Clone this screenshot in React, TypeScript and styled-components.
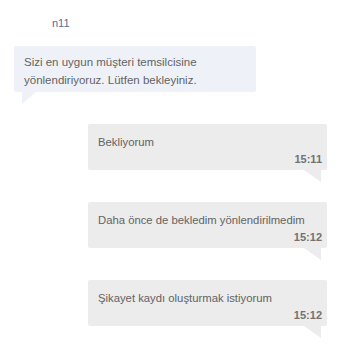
import { FC } from 'react';
import styled, { createGlobalStyle } from 'styled-components';

const GlobalStyle = createGlobalStyle`
  html, body {
    margin: 0;
    padding: 0;
    background: #ffffff;
    font-family: 'Liberation Sans', Arial, sans-serif;
  }
`;

const Page = styled.div`
  width: 350px;
  height: 350px;
  overflow: hidden;
  display: flex;
  flex-direction: column;
  padding-top: 16px;
  box-sizing: border-box;
`;

const Sender = styled.div`
  margin-left: 52px;
  height: 14px;
  font-size: 11px;
  line-height: 14px;
  color: #4f6fa3;
`;

const Bubble = styled.div<{ $mine?: boolean }>`
  position: relative;
  box-sizing: border-box;
  height: 46px;
  margin-left: ${(p) => (p.$mine ? '88px' : '14px')};
  margin-right: ${(p) => (p.$mine ? '23px' : '94px')};
  margin-top: ${(p) => (p.$mine ? '32px' : '16px')};
  padding: ${(p) => (p.$mine ? '9px 5px 0 10px' : '7px 10px 0 10px')};
  background: ${(p) => (p.$mine ? '#ececec' : '#eef2f8')};
  border-radius: 2px;
  font-size: ${(p) => (p.$mine ? '11.3px' : '11.5px')};
  line-height: 18px;
  color: #636363;

  &::after {
    content: '';
    position: absolute;
    top: 100%;
    width: 0;
    height: 0;
    ${(p) =>
      p.$mine
        ? `right: 6px;
           border-top: 12px solid #ececec;
           border-left: 17px solid transparent;`
        : `left: 8px;
           border-top: 12px solid #eef2f8;
           border-right: 14px solid transparent;`}
  }
`;

const Time = styled.div`
  text-align: right;
  font-size: 11px;
  line-height: 16px;
  font-weight: bold;
  color: #727272;
`;

interface IMessage {
  text: string;
  time: string;
}

const messages: IMessage[] = [
  { text: 'Bekliyorum', time: '15:11' },
  { text: 'Daha önce de bekledim yönlendirilmedim', time: '15:12' },
  { text: 'Şikayet kaydı oluşturmak istiyorum', time: '15:12' },
];

const App: FC = () => {
  return (
    <Page>
      <GlobalStyle />
      <Sender>n11</Sender>
      <Bubble>
        Sizi en uygun müşteri temsilcisine
        <br />
        yönlendiriyoruz. Lütfen bekleyiniz.
      </Bubble>
      {messages.map((m, i) => (
        <Bubble $mine key={i}>
          {m.text}
          <Time>{m.time}</Time>
        </Bubble>
      ))}
    </Page>
  );
};

export default App;
